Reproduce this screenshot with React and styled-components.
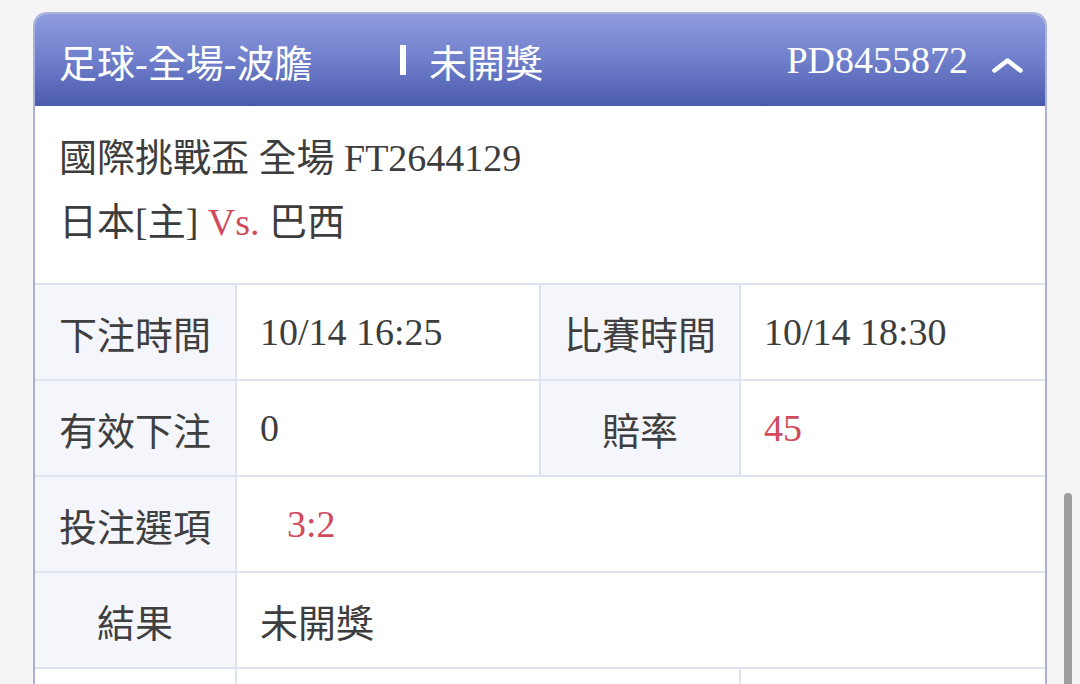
import React from "react";
import styled, { createGlobalStyle } from "styled-components";

const GlobalStyle = createGlobalStyle`
  html, body {
    margin: 0;
    padding: 0;
    background: #f5f5f5;
    overflow: hidden;
  }
  body {
    font-family: "Liberation Serif", "Noto Sans CJK TC", serif;
    color: #3d3d3d;
  }
`;

const Page = styled.div`
  padding: 12px 33px 0;
`;

const Card = styled.section`
  background: #fff;
  border: 2px solid #a9b1d9;
  border-bottom: none;
  border-radius: 14px 14px 0 0;
  overflow: hidden;
`;

const Header = styled.header`
  height: 92px;
  display: flex;
  align-items: center;
  padding: 0 22px 0 24px;
  background: linear-gradient(180deg, #8e9bde 0%, #6f7fcb 50%, #4b5bac 100%);
  color: #fff;
  font-size: 38px;
`;

const Title = styled.div`
  width: 341px;
  flex-shrink: 0;
  white-space: nowrap;
`;

const Status = styled.div`
  display: flex;
  align-items: center;
  flex: 1;
  white-space: nowrap;
`;

const Bar = styled.span`
  display: inline-block;
  width: 6px;
  height: 30px;
  margin-right: 23px;
  background: #fff;
`;

const OrderNo = styled.div`
  display: flex;
  align-items: center;
  gap: 24px;

  svg {
    margin-top: 10px;
  }
`;

const Info = styled.div`
  padding: 20px 22px 29px 24px;
  font-size: 38px;
  line-height: 64px;
`;

const Line = styled.div`
  white-space: nowrap;
`;

const Red = styled.span`
  color: #d04a5c;
`;

const Table = styled.div`
  display: grid;
  grid-template-columns: 200px 302px 198px 1fr;
  grid-auto-rows: 94px;
  gap: 2px;
  background: #dfe3ef;
  border-top: 2px solid #dfe3ef;
`;

const Label = styled.div`
  display: flex;
  align-items: center;
  justify-content: center;
  background: #f4f6fb;
  font-size: 38px;
  color: #3f3f3f;
`;

const Value = styled.div`
  display: flex;
  align-items: center;
  padding-left: ${({ $indent }) => ($indent ? 50 : 23)}px;
  background: #fff;
  font-size: 38px;
  color: ${({ $red }) => ($red ? "#d04a5c" : "#3d3d3d")};
  grid-column: ${({ $span }) => ($span ? `span ${$span}` : "auto")};
  white-space: nowrap;
`;

const Scrollbar = styled.div`
  position: fixed;
  right: 8px;
  top: 493px;
  bottom: -10px;
  width: 8px;
  border-radius: 5px;
  background: #9d9d9d;
`;

const ChevronUp = () => (
  <svg width="31" height="15" viewBox="0 0 31 15" fill="none">
    <polyline
      points="2.5,12.5 15.5,2.5 28.5,12.5"
      stroke="#fff"
      strokeWidth="4.5"
      strokeLinecap="round"
      strokeLinejoin="round"
    />
  </svg>
);

const App = () => {
  return (
    <Page>
      <GlobalStyle />
      <Card>
        <Header>
          <Title>足球-全場-波膽</Title>
          <Status>
            <Bar />
            未開獎
          </Status>
          <OrderNo>
            PD8455872
            <ChevronUp />
          </OrderNo>
        </Header>
        <Info>
          <Line>國際挑戰盃 全場 FT2644129</Line>
          <Line>
            日本[主] <Red>Vs.</Red> 巴西
          </Line>
        </Info>
        <Table>
          <Label>下注時間</Label>
          <Value>10/14 16:25</Value>
          <Label>比賽時間</Label>
          <Value>10/14 18:30</Value>

          <Label>有效下注</Label>
          <Value>0</Value>
          <Label>賠率</Label>
          <Value $red>45</Value>

          <Label>投注選項</Label>
          <Value $span={3} $indent $red>
            3:2
          </Value>

          <Label>結果</Label>
          <Value $span={3}>未開獎</Value>

          <Value />
          <Value $span={2} />
          <Value />
        </Table>
      </Card>
      <Scrollbar />
    </Page>
  );
};

export default App;
